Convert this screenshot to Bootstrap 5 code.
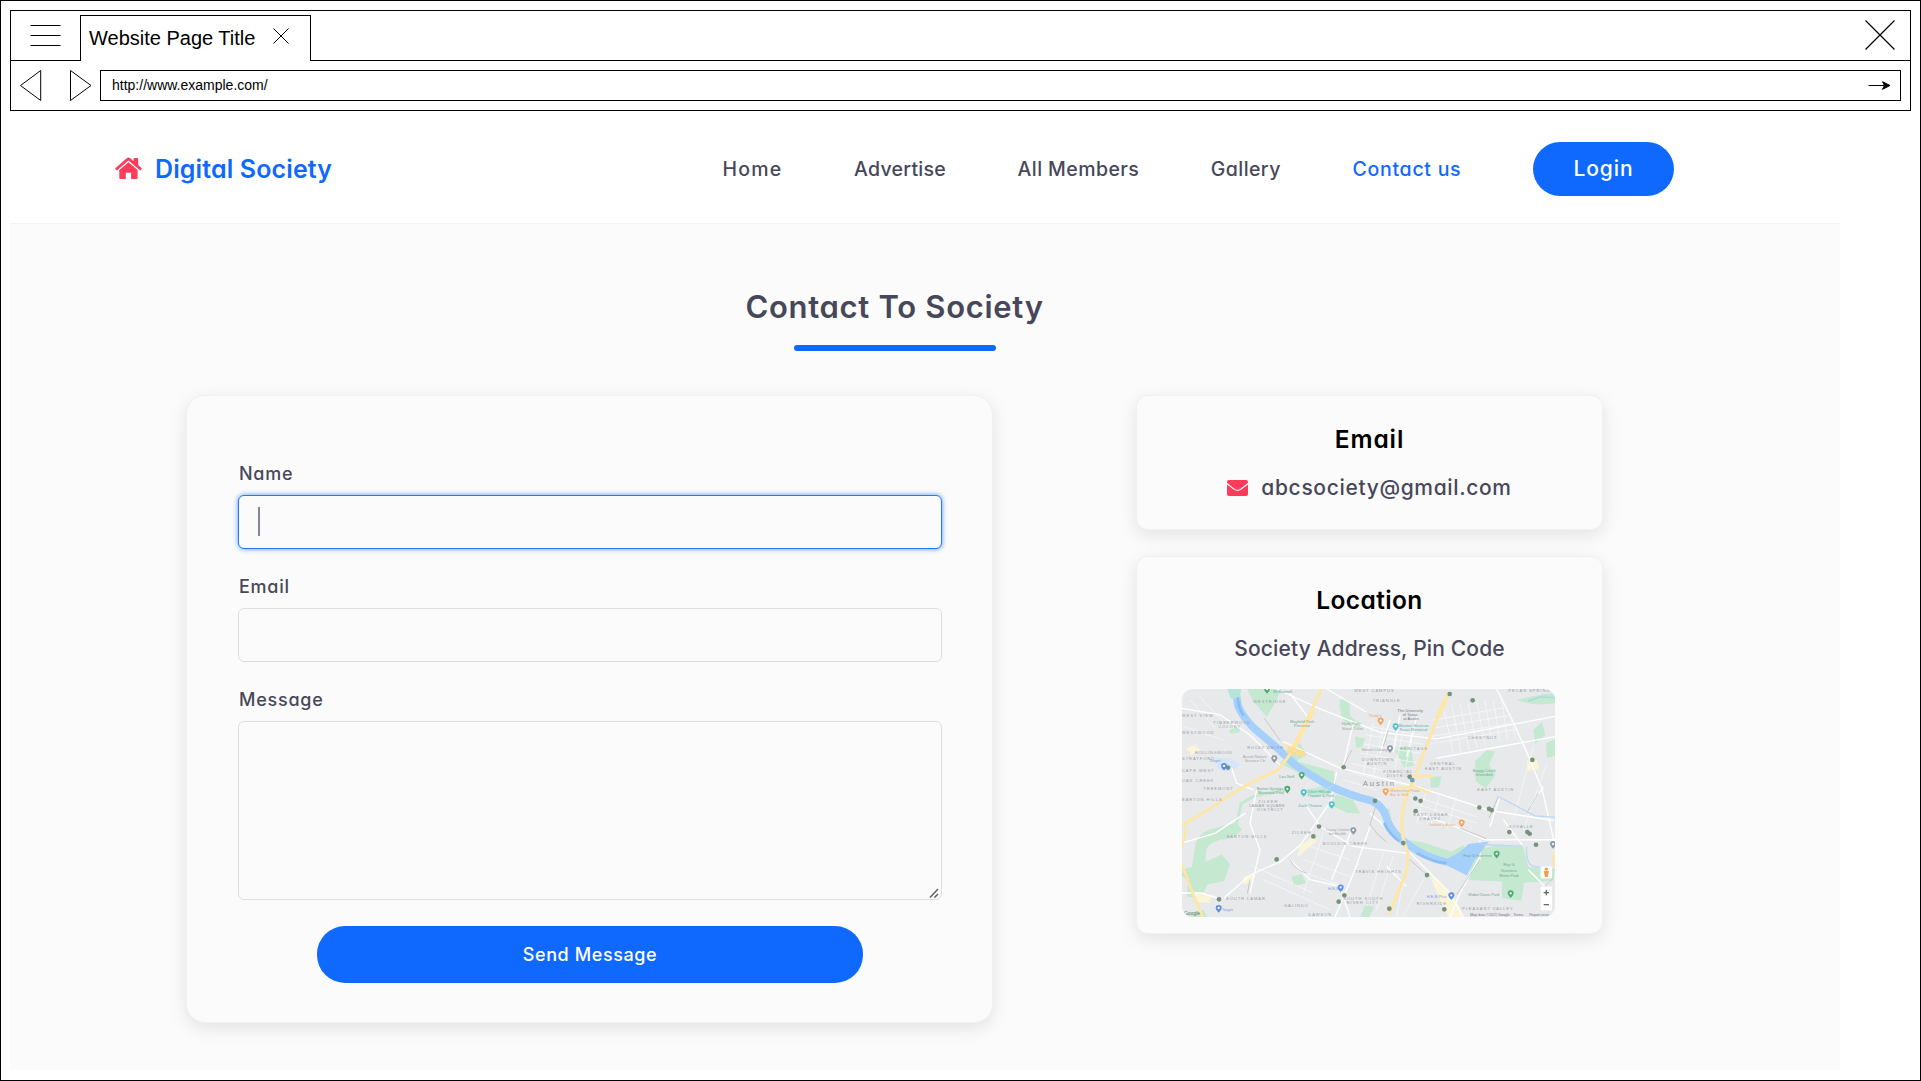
<!DOCTYPE html>
<html lang="en">
<head>
<meta charset="utf-8">
<meta name="viewport" content="width=device-width, initial-scale=1">
<title>Digital Society - Contact us</title>
<link href="https://cdn.jsdelivr.net/npm/bootstrap@5.3.0/dist/css/bootstrap.min.css" rel="stylesheet">
<style>
  :root { --ink: #47475a; --brand: #0f69ff; --accent: #fe3c5a; --paper: #fbfbfb; }
  body { font-family: Inter, "Open Sans", sans-serif; font-feature-settings: "cv11"; color: var(--ink); background: #fff; }
  .window { width: 1921px; height: 1081px; border: 1px solid #000; padding: 9px; overflow: hidden; }
  svg { display: block; flex-shrink: 0; }
  /* browser chrome */
  .chrome { height: 101px; border: 1px solid #000; font-family: "Liberation Sans", Arial, sans-serif; color: #000; }
  .tabs { height: 50px; }
  .tabs-gap { border-bottom: 1px solid #000; }
  .tabs-menu { width: 69px; padding: 13px 0 0 19px; }
  .tabs-end { padding: 0 15px 2px 0; }
  .tab-open { width: 231px; margin-top: 4px; border: 1px solid #000; border-bottom: 0; padding: 0 21px 2px 8px; font-size: 20px; }
  .tab-open svg { margin-top: -4px; }
  .address-row { height: 49px; padding: 0 9px 0 9px; }
  .address { height: 31px; border: 1px solid #000; padding: 0 9px 0 11px; font-size: 14px; }
  /* site */
  .site { width: 1830px; }
  .site-head { height: 112px; padding: 4px 166px 0 105px; }
  .brand { font-size: 25px; font-weight: 600; color: var(--brand); letter-spacing: .13px; margin-left: 13px; padding-top: 1px; }
  .site-nav { font-size: 19.5px; font-weight: 450; gap: 71.7px; white-space: nowrap; }
  .site-nav a { color: inherit; text-decoration: none; padding-top: 2px; }
  .site-nav .here { color: var(--brand); }
  .btn-site { background: var(--brand); border: 0; color: #fff; font-weight: 500; border-radius: 28px; }
  .btn-login { width: 141px; height: 54px; font-size: 21px; letter-spacing: .9px; }
  .contact { height: 847px; background: var(--paper); border-top: 1px solid #f4f4f4; padding: 64px 237px 0 176px; }
  .contact-title { font-size: 31px; line-height: 37px; font-weight: 600; letter-spacing: .7px; }
  .title-rule { width: 202px; height: 6px; border-radius: 3px; background: var(--brand); margin: 20px auto 44px; }
  .panel { background: var(--paper); border: 1px solid #f1f1f1; box-shadow: 0 5px 18px rgba(0,0,0,.1); }
  .panel-form { width: 807px; height: 628px; border-radius: 19px; padding: 65px 50px 0 51px; }
  .field-label { display: block; font-size: 18px; line-height: 26px; font-weight: 500; letter-spacing: .75px; margin: 0 0 8px 1px; }
  .field { height: 54px; border: 1px solid #dedede; border-radius: 6px; background: var(--paper); padding: 0 20px; margin-bottom: 25px; resize: none; }
  .field:focus { background: var(--paper); }
  .field-active { border-color: #2478ff; box-shadow: 0 0 5px rgba(15,105,255,.7); }
  .caret { left: 20px; top: 12px; width: 2px; height: 29px; background: #858592; }
  .grip { right: 3px; bottom: 2px; }
  .btn-send { width: 546px; height: 57px; font-size: 18px; letter-spacing: .6px; margin: 26px auto 0; }
  .side { width: 467px; gap: 26px; }
  .side .panel { border-radius: 12px; text-align: center; }
  .side h3 { font-size: 24.5px; line-height: 30px; font-weight: 600; color: #000; margin: 28px 0 0; }
  .side-line { font-size: 21px; line-height: 28px; font-weight: 450; margin-top: 20px; }
  .map { border-radius: 11px; margin: 26px 45px 0; }
</style>
</head>
<body>
<div class="window">
  <header class="chrome">
    <div class="tabs d-flex">
      <div class="tabs-gap tabs-menu"><svg width="31" height="23" stroke="#000"><path d="M.5 1.5h30M.5 11.5h30M.5 21.5h30"/></svg></div>
      <div class="tab-open d-flex align-items-center justify-content-between">
        <span>Website Page Title</span>
        <svg width="16" height="16" stroke="#000"><path d="M.5.5l15 15M15.5.5l-15 15"/></svg>
      </div>
      <div class="tabs-gap tabs-end flex-grow-1 d-flex justify-content-end align-items-center">
        <svg width="30" height="30" stroke="#000" stroke-width="1.200"><path d="M.5.5l29 29M29.500.5l-29 29"/></svg>
      </div>
    </div>
    <div class="address-row d-flex align-items-center">
      <svg width="80" height="31" fill="none" stroke="#000"><path d="M.5 15.500L20.700.5v30zM50.500.5v30l20.500-15z"/></svg>
      <div class="address flex-grow-1 d-flex align-items-center justify-content-between">
        <span>http://www.example.com/</span>
        <svg width="23" height="9" stroke="#000"><path d="M.5 4.500h16"/><path d="M14.500.7L22 4.500l-7.500 3.800 2-3.800z"/></svg>
      </div>
    </div>
  </header>

  <main class="site">
    <div class="site-head d-flex align-items-center">
      <svg width="27" height="23" viewBox="0 0 27 23" fill="#fe3c5a" style="margin-top:-1px"><path d="M13.500 5.200L4.300 13v8q0 1 1 1h5.500v-6.300h5.300V22h5.500q1 0 1-1v-8z"/><path d="M13.500.5q.8 0 1.500.6l3.600 3.100V1.800q0-.9.900-.9h2.800q.9 0 .9.900V8.100l3.200 2.800q.7.600.1 1.300l-.6.7q-.6.600-1.300.1L13.500 3.500 2.400 13q-.7.500-1.300-.1l-.6-.7q-.6-.7.1-1.300L12 1.100q.7-.6 1.500-.6z"/></svg>
      <span class="brand">Digital Society</span>
      <nav class="site-nav d-flex align-items-center ms-auto">
        <a href="#" style="letter-spacing:1.200px">Home</a>
        <a href="#" style="letter-spacing:.25px">Advertise</a>
        <a href="#" style="letter-spacing:.42px">All Members</a>
        <a href="#" style="letter-spacing:.42px">Gallery</a>
        <a href="#" class="here" style="letter-spacing:.72px">Contact us</a>
        <button type="button" class="btn btn-site btn-login p-0">Login</button>
      </nav>
    </div>

    <section class="contact">
      <h2 class="contact-title text-center m-0">Contact To Society</h2>
      <div class="title-rule"></div>
      <div class="d-flex justify-content-between align-items-start">
        <form class="panel panel-form">
          <label class="field-label" for="name">Name</label>
          <div class="position-relative">
            <input id="name" class="form-control field field-active" type="text">
            <span class="caret position-absolute"></span>
          </div>
          <label class="field-label" for="email">Email</label>
          <input id="email" class="form-control field" type="email">
          <label class="field-label" for="message">Message</label>
          <div class="position-relative">
            <textarea id="message" class="form-control field m-0" style="height:179px"></textarea>
            <svg class="grip position-absolute" width="10" height="10" stroke="#666" stroke-width="1.600"><path d="M1 9.500L9 1M5.500 9.500L9 6"/></svg>
          </div>
          <button type="button" class="btn btn-site btn-send d-block p-0">Send Message</button>
        </form>

        <div class="side d-flex flex-column">
          <div class="panel" style="height:135px">
            <h3 style="letter-spacing:.9px">Email</h3>
            <div class="side-line d-flex align-items-center justify-content-center" style="letter-spacing:.66px">
              <svg class="me-3" width="21" height="16" viewBox="0 0 21 16" fill="#fe3c5a"><path d="M2 0h17q2 0 2 2v.8q-3 2.600-7.500 6-3 2.200-6 0Q3 5.400 0 2.800V2Q0 0 2 0z"/><path d="M0 4.400l7 5.400q3.500 2.300 7 0l7-5.400V14q0 2-2 2H2q-2 0-2-2z"/></svg>
              <span style="margin-left:-3px">abcsociety@gmail.com</span>
            </div>
          </div>
          <div class="panel" style="height:378px">
            <h3 style="letter-spacing:.38px">Location</h3>
            <div class="side-line" style="letter-spacing:.15px">Society Address, Pin Code</div>
            <svg class="map" width="373" height="228" viewBox="36 27 1119 685" preserveAspectRatio="none" fill="none">
              <defs>
                <filter id="soft" x="-5%" y="-5%" width="110%" height="110%"><feGaussianBlur stdDeviation="1.500"/></filter>
                <g id="pin"><path d="M0 11q-9-9-9-14a9 9 0 0 1 18 0q0 5-9 14z"/><circle cy="-3" r="3.500" fill="#fff"/></g>
              </defs>
              <rect x="36" y="27" width="1119" height="685" fill="#e8e9eb"/>
              <g filter="url(#soft)">
              <!-- parks -->
              <g fill="#c5e9d0">
                <path d="M232 27h100l-10 30-32 54-42-50z"/>
                <path d="M510 62q18-15 28 5l2 40q20 20 38 24l-8 14q-40-4-52-28-12-30-8-55z"/>
                <path d="M555 170l30 5-8 25-18 4zM672 205l50-8 10 60-30 6z"/>
                <path d="M1040 60q50-14 115-22v32q-60 10-115-10zM1090 150l26-24 10 40-30 26zM1128 190l27-12v50l-24 6z"/>
                <path d="M330 250l60-60 20 34-30 20 110 30 10 44-60-10z"/>
                <path d="M500 345l50 16 20 40-40-2-50-24zM400 330l60-10 30 18-60 16z"/>
                <path d="M915 245l35-35 25 5-18 40 20 30-30 40-30-20z"/>
                <path d="M910 510l70-12 80 4 15 60 80 5-5 36-88 6-8 54-58-8v-50l-100-4z"/>
                <path d="M715 480l50 10 80 26 35-20 10 12-40 28-70-8-55-28z"/>
                <path d="M630 375l30 14 4 50-16 4z"/>
                <path d="M80 480q20-30 60-36l60-16 16 22q-20 26-64 30-44 12-44 40l-2 26 50-22 24 30-18 50-50 10-20 44-42-8 6-46-40-32 50-10q6-50 14-82z"/>
                <path d="M365 590l30-6 14 26-38 8zM585 676l28 5-14 31h-28zM780 290h35l-8 32-24 2zM50 700l50-8 12 20H50z"/>
                <path d="M175 150l30-8 6 14-28 6z"/>
              </g>
              <path d="M200 430l14-60 40-22 90-18" stroke="#c5e9d0" stroke-width="9"/>
              <g fill="#fbf5d8">
                <path d="M50 205l25-10 15 15-25 16zM220 590l36-6-14 26-22 2zM1070 245l30-6 8 28-34 6zM780 590l26 10 60 80 10 32h-40l-20-40zM390 500l40-30 10 14-60 50z"/>
                <path d="M66 640l60 6-8 24-40-4z"/>
              </g>
              <path d="M135 235h50l25 20-30 22-36-10z" fill="#d5e5fb"/>
              <!-- minor streets -->
              <g stroke="#fff" stroke-width="4">
                <path d="M320 27l130 60 180 70 170 20 355-68M800 235l355-65M470 27l120 70M980 27l50 100 40 90 46 110 39 170"/>
                <path d="M340 185l170 80 230 55 220 72 190 30M185 265l15 45 50 20M330 255l-90-90-90-60-114-20"/>
                <path d="M500 275l-18 90-90 130-60 50-90 40-80 70M600 440l-45 130-60 142M545 450l-60 150M36 640h60l60 20"/>
                <path d="M36 490l100-30 90-60M720 520l60 60 60 60 40 72M930 530l-60 110-30 72M930 480v60M735 400l120 40 90 40h210"/>
                <path d="M600 400l100 90M360 540l60 60 90 20 30 92M990 350l-30 90M1080 380l40-60M550 130l-30 130M660 120l-30 100M690 105l-20 110M740 110l-30 120"/>
                <path d="M420 120l-60-80M260 330l-20 100 30 80-30 130M410 380l40 60 100 60 160 20M650 560l60 60M1075 570l60 60M1000 420l60 80"/>
              </g>
              <g stroke="#f7f8f9" stroke-width="2.200">
                <path d="M820 80l30 140M845 75l28 140M870 72l28 140M895 70l26 134M920 65l26 134M945 62l22 130M970 60l20 126M995 56l18 124M1020 100l16 74"/>
                <path d="M790 120l210-36M786 145l230-38M782 170l240-40M780 192l260-44M600 140l160 26M590 165l170 28M580 192l170 28M570 220l170 28M540 250l180 40M550 280l170 40"/>
                <path d="M610 130l-30 150M640 135l-30 150M700 150l-30 140M730 155l-30 140M520 300l100 30M60 60l80 90M90 50l90 100M40 140l120 40M720 345l200 66M730 370l190 60M770 330l-30 100M810 340l-30 100M860 350l-30 100"/>
                <path d="M420 500l120 40M400 540l140 50M380 570l140 50M460 460l-60 180M640 520l-50 160M670 530l-50 160M280 600l200 90M250 560l180 80M1090 200l-60 220M1130 250l-70 200M700 600l-20 110M760 600l-60 110"/>
              </g>
              <g stroke="#bfc1c6" stroke-width="2.500">
                <path d="M283 115l48 68M620 370l-20 65q20 30 50 52M360 540q20 35 50 40M720 540l50 45M930 540l-70 105M985 350l-28 65M1105 340l-35 60M545 210l-25 50M655 150l-15 50M240 600l-8 42M1150 595l-30 30M870 445l80 32"/>
              </g>
              <!-- river -->
              <path d="M196 27l8 50q14 34 46 66l70 60 55 52q40 26 100 62 70 32 130 46 34 16 44 50t40 62q50 42 105 62 50 18 96 8" stroke="#a5d0fb" stroke-width="23" stroke-linejoin="round"/>
              <path d="M172 27h42l-6 32-26-4z" fill="#b6e3dc"/>
              <path d="M835 535q36-14 60-42l62-8-46 60-20 42-36-18-22-10z" fill="#a5d0fb"/>
              <path d="M203 52q2 34 18 54M642 430q18 36 46 54M740 520q50 28 90 30" stroke="#88bdf5" stroke-width="8"/>
              <path d="M430 335q40-2 60-20M985 350l110 58 60 4M1070 500q-4 50 20 60l40 6M940 495l120 4" stroke="#bcd8f4" stroke-width="4"/>
              <path d="M1075 63l35-12 45 2" stroke="#a9dbdc" stroke-width="5"/>
              <!-- highways -->
              <g stroke="#fde6a6">
                <path d="M455 27l-40 85-52 108-38 50q-80 35-140 72-70 50-149 94" stroke-width="9"/>
                <path d="M428 92l-62 120" stroke-width="15"/>
                <path d="M832 45l-30 70-58 150-38 95q-16 50-8 110l16 50-4 55-52 127" stroke-width="9"/>
                <path d="M825 62l-22 50" stroke-width="15"/>
                <path d="M50 440l-14 60M36 555l30 80 32 77" stroke-width="8"/>
                <path d="M345 195l60 26M650 330l80-10 50 20M1152 520v40M740 290h50" stroke-width="7"/>
              </g>
              <path d="M355 200l50 14v16l-56-10z" fill="#fbdc93"/>
              </g>
              <!-- district names -->
              <g fill="#9a9da8" font-family="Liberation Sans, Arial, sans-serif" font-size="12" letter-spacing="3">
                <text x="250" y="70">WESTRIDGE</text><text x="552" y="35">WEST CAMPUS</text><text x="608" y="67">TRIANGLE</text><text x="1015" y="36">PECAN SPRINGS</text>
                <text x="36" y="110">WEST VIEW</text><text x="130" y="131">TIMBERWOOD</text><text x="145" y="144">COLONY</text><text x="36" y="162">WESTWOOD</text>
                <text x="75" y="221" letter-spacing="2">ROLLINGWOOD</text><text x="36" y="240">STRATFORD</text><text x="36" y="275">CAPE WEST</text><text x="36" y="305">OAK CREEK</text><text x="100" y="330">TREEMONT</text><text x="36" y="362">BARTON HILLS</text>
                <text x="232" y="208" letter-spacing="2">ROCKY WATER</text><text x="690" y="210">HERITAGE</text><text x="575" y="242">DOWNTOWN</text><text x="590" y="255">AUSTIN</text><text x="640" y="279">FINANCIAL</text><text x="650" y="292">DISTRICT</text>
                <text x="780" y="256">CENTRAL</text><text x="765" y="269">EAST AUSTIN</text><text x="893" y="176">CHESTNUT</text><text x="922" y="334">EAST AUSTIN</text><text x="730" y="409">EAST CESAR</text><text x="748" y="421">CHAVEZ</text>
                <text x="265" y="370">ZILKER</text><text x="238" y="382" letter-spacing="1">LAMAR SQUARE</text><text x="262" y="394">DISTRICT</text><text x="170" y="474">BARTON HILLS</text><text x="365" y="464">ZILKER</text><text x="458" y="495">BOULDIN CREEK</text>
                <text x="555" y="581">TRAVIS HEIGHTS</text><text x="168" y="662">SOUTH LAMAR</text><text x="342" y="682">GALINDO</text><text x="520" y="660">SOUTH SOUTH</text><text x="530" y="672">RIVER CITY</text><text x="415" y="710">DAWSON</text><text x="1015" y="444">GOVALLE</text><text x="740" y="677">RIVERSIDE</text><text x="876" y="690">PLEASANT VALLEY</text>
              </g>
              <g font-family="Liberation Sans, Arial, sans-serif" font-size="12">
                <text x="578" y="318" font-size="23" letter-spacing="6" fill="#8f929d">Austin</text>
                <g fill="#667f8c"><text x="682" y="95">The University</text><text x="698" y="108">of Texas</text><text x="700" y="121">at Austin</text></g>
                <g fill="#72a793"><text x="360" y="129">Mayfield Park</text><text x="372" y="141">Preserve</text><text x="310" y="38">Mt Bonnell</text><text x="328" y="293">Lou Neff</text><text x="260" y="329">Barton Springs</text><text x="264" y="342">Municipal Pool</text><text x="908" y="276">Boggy Creek</text><text x="916" y="288">Greenbelt</text><text x="880" y="531">Roy G Guerrero</text><text x="895" y="649">Mabel Davis Park</text><text x="1000" y="560">Roy G.</text><text x="992" y="576">Guerrero</text><text x="988" y="592">Metro Park</text></g>
                <g fill="#5fb0b5"><text x="686" y="141">Blanton Museum</text><text x="688" y="153">Texas Memorial</text><text x="412" y="339">Zilker Hillside</text><text x="412" y="351">Theater &amp; Park</text><text x="385" y="381">Zach Theatre</text></g>
                <g fill="#e5aa72"><text x="596" y="111">Trudy's</text><text x="660" y="337">Moonshine Patio</text><text x="660" y="349">Bar &amp; Grill</text><text x="776" y="438">Justine's Brass</text></g>
                <g fill="#a2a5ae"><text x="218" y="234">Austin Nature</text><text x="224" y="247">Science Ctr</text><text x="575" y="213">Mount Calvary</text><text x="468" y="454">Crazy Center</text><text x="476" y="466">for Health</text><text x="515" y="136">Hyde Park</text><text x="515" y="149">Shoal Creek</text></g>
                <g fill="#7f9fd9"><text x="118" y="246">Target</text><text x="474" y="631">H-E-B</text><text x="770" y="655">H-E-B Plus</text><text x="155" y="694">Target</text></g>
                <g fill="#777" font-size="11"><text x="42" y="706" font-size="15">Google</text><text x="900" y="709">Map data ©2021 Google</text><text x="1030" y="709">Terms</text><text x="1078" y="709">Report error</text></g>
              </g>
              <g fill="#789179"><circle cx="839" cy="42" r="7"/><circle cx="908" cy="61" r="7"/><circle cx="174" cy="263" r="7"/><circle cx="521" cy="262" r="7"/><circle cx="719" cy="291" r="7"/><circle cx="727" cy="301" r="7" fill="#76a0b8"/><circle cx="615" cy="363" r="7"/><circle cx="736" cy="356" r="7"/><circle cx="752" cy="363" r="7"/><circle cx="737" cy="394" r="7"/><circle cx="1087" cy="240" r="7"/><circle cx="928" cy="383" r="7"/><circle cx="957" cy="387" r="7"/><circle cx="965" cy="391" r="7"/><circle cx="1018" cy="457" r="7"/><circle cx="1072" cy="457" r="7"/><circle cx="1079" cy="462" r="7"/><circle cx="1098" cy="495" r="7"/><circle cx="447" cy="440" r="7"/><circle cx="430" cy="470" r="7"/><circle cx="320" cy="539" r="7"/><circle cx="700" cy="490" r="7"/><circle cx="771" cy="586" r="7"/><circle cx="523" cy="647" r="7"/><circle cx="506" cy="666" r="7"/><circle cx="658" cy="687" r="7"/><circle cx="147" cy="659" r="7"/><circle cx="823" cy="689" r="7"/></g>
              <g fill="#4fa874"><use href="#pin" x="291" y="30"/><use href="#pin" x="395" y="288"/><use href="#pin" x="352" y="330"/><use href="#pin" x="980" y="525"/><use href="#pin" x="1022" y="644"/></g>
              <g fill="#4fbfc9"><use href="#pin" x="677" y="142"/><use href="#pin" x="401" y="340"/><use href="#pin" x="485" y="376"/></g>
              <g fill="#f2a55c"><use href="#pin" x="632" y="125"/><use href="#pin" x="647" y="337"/><use href="#pin" x="875" y="431"/></g>
              <g fill="#5c8be0"><use href="#pin" x="162" y="261"/><use href="#pin" x="512" y="626"/><use href="#pin" x="844" y="650"/><use href="#pin" x="146" y="688"/></g>
              <g fill="#8f98a8"><use href="#pin" x="313" y="238"/><use href="#pin" x="660" y="208"/><use href="#pin" x="550" y="454"/><use href="#pin" x="1149" y="496"/></g>
              <rect x="1112" y="560" width="34" height="36" rx="3" fill="#fff"/><circle cx="1129" cy="568" r="5" fill="#f0a044"/><path d="M1121 574h16l-4 18h-8z" fill="#f0a044"/>
              <rect x="1112" y="620" width="34" height="72" rx="3" fill="#fff"/><path d="M1121 639h16M1129 631v16M1121 675h16" stroke="#666" stroke-width="4"/>
            </svg>
          </div>
        </div>
      </div>
    </section>
  </main>
</div>
<script src="https://cdn.jsdelivr.net/npm/bootstrap@5.3.0/dist/js/bootstrap.bundle.min.js"></script>
</body>
</html>
